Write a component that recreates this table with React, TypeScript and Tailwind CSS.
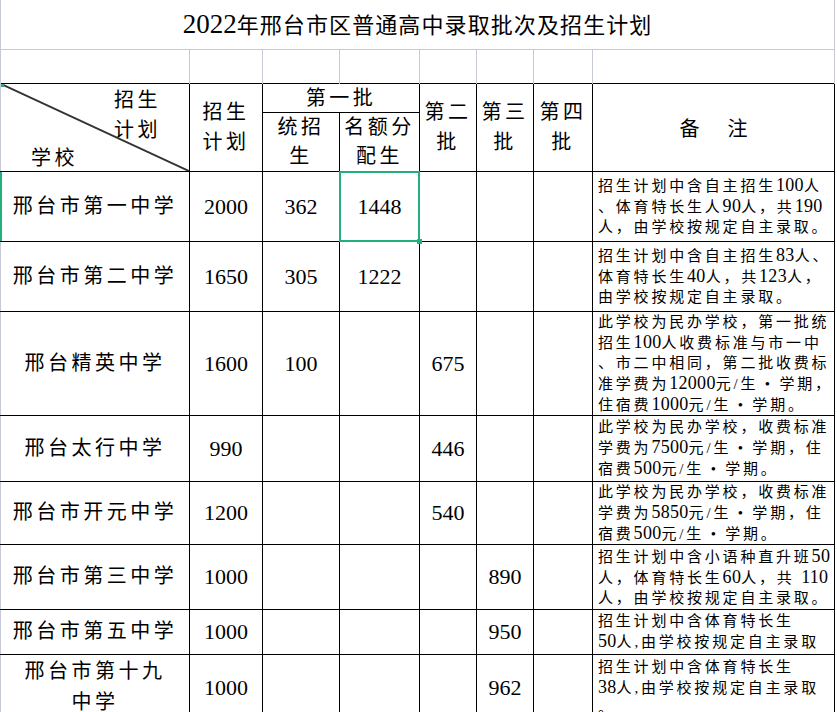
import React from "react"

const green = "#21b07a"

// digits get their own (larger) latin size, everything else uses the CJK size
function Mixed({ text, latin }: { text: string; latin: string }) {
  const parts = text.split(/(\d+)/)
  return (
    <>
      {parts.map((p, i) =>
        /^\d+$/.test(p) ? (
          <span key={i} className={latin}>
            {p}
          </span>
        ) : (
          <span key={i}>{p}</span>
        )
      )}
    </>
  )
}

type Row = {
  h: string
  name: string[]
  plan: string
  tong: string
  ming: string
  b2: string
  b3: string
  notes: string[]
  sel?: boolean
}

const rows: Row[] = [
  {
    h: "h-[70px]",
    name: ["邢台市第一中学"],
    plan: "2000",
    tong: "362",
    ming: "1448",
    b2: "",
    b3: "",
    notes: ["招生计划中含自主招生100人", "、体育特长生人90人，共190", "人，由学校按规定自主录取。"],
    sel: true,
  },
  {
    h: "h-[70px]",
    name: ["邢台市第二中学"],
    plan: "1650",
    tong: "305",
    ming: "1222",
    b2: "",
    b3: "",
    notes: ["招生计划中含自主招生83人、", "体育特长生40人，共123人，", "由学校按规定自主录取。"],
  },
  {
    h: "h-[104px]",
    name: ["邢台精英中学"],
    plan: "1600",
    tong: "100",
    ming: "",
    b2: "675",
    b3: "",
    notes: [
      "此学校为民办学校，第一批统",
      "招生100人收费标准与市一中",
      "、市二中相同，第二批收费标",
      "准学费为12000元/生 • 学期，",
      "住宿费1000元/生 • 学期。",
    ],
  },
  {
    h: "h-[66px]",
    name: ["邢台太行中学"],
    plan: "990",
    tong: "",
    ming: "",
    b2: "446",
    b3: "",
    notes: ["此学校为民办学校，收费标准", "学费为7500元/生 • 学期，住", "宿费500元/生 • 学期。"],
  },
  {
    h: "h-[63px]",
    name: ["邢台市开元中学"],
    plan: "1200",
    tong: "",
    ming: "",
    b2: "540",
    b3: "",
    notes: ["此学校为民办学校，收费标准", "学费为5850元/生 • 学期，住", "宿费500元/生 • 学期。"],
  },
  {
    h: "h-[65px]",
    name: ["邢台市第三中学"],
    plan: "1000",
    tong: "",
    ming: "",
    b2: "",
    b3: "890",
    notes: ["招生计划中含小语种直升班50", "人，体育特长生60人，共 110", "人，由学校按规定自主录取。"],
  },
  {
    h: "h-[45px]",
    name: ["邢台市第五中学"],
    plan: "1000",
    tong: "",
    ming: "",
    b2: "",
    b3: "950",
    notes: ["招生计划中含体育特长生", "50人,由学校按规定自主录取"],
  },
  {
    h: "h-[66px]",
    name: ["邢台市第十九", "中学"],
    plan: "1000",
    tong: "",
    ming: "",
    b2: "",
    b3: "962",
    notes: ["招生计划中含体育特长生", "38人,由学校按规定自主录取", "。"],
  },
]

const cell = "p-0 border border-black text-center align-middle"
const first = "p-0 border border-black border-l-[#c6c9d8] text-center align-middle"
const gray = "p-0 border-l border-r border-[#c6c9d8]"
const head = "text-[20px] leading-[30px] tracking-[3.5px]"
const num = "text-[22px]"

export default function App() {
  return (
    <div className="w-[837px] h-[712px] overflow-hidden bg-white text-black font-['Liberation_Serif','Noto_Sans_CJK_SC',serif]">
      <table className="table-fixed border-collapse w-[835px]">
        <colgroup>
          <col className="w-[189px]" />
          <col className="w-[73px]" />
          <col className="w-[77px]" />
          <col className="w-[80px]" />
          <col className="w-[57px]" />
          <col className="w-[57px]" />
          <col className="w-[59px]" />
          <col className="w-[242px]" />
        </colgroup>
        <tbody>
          <tr className="h-[49px]">
            <td
              colSpan={8}
              className="p-0 border-l border-r border-b border-[#c6c9d8] text-center align-middle text-[22px] tracking-[1.1px] whitespace-nowrap"
            >
              <Mixed text="2022年邢台市区普通高中录取批次及招生计划" latin="text-[27px] tracking-normal" />
            </td>
          </tr>
          <tr className="h-[34px]">
            {[0, 1, 2, 3, 4, 5, 6, 7].map((i) => (
              <td key={i} className={gray} />
            ))}
          </tr>
          <tr className="h-[29px]">
            <td rowSpan={2} className={first + " relative align-top"}>
              <svg
                className="absolute inset-0 h-full w-full"
                viewBox="0 0 100 100"
                preserveAspectRatio="none"
              >
                <line
                  x1="0"
                  y1="0"
                  x2="100"
                  y2="100"
                  stroke="#333"
                  strokeWidth="2"
                  vectorEffect="non-scaling-stroke"
                />
              </svg>
              <span className="absolute left-0 top-0 h-[3px] w-[3px] bg-[#21b07a]" />
              <div className={"flex flex-col pt-[1px] text-left " + head}>
                <span className="pl-[113px]">招生</span>
                <span className="pl-[113px]">计划</span>
                <span className="pl-[30px] leading-[26px]">学校</span>
              </div>
            </td>
            <td rowSpan={2} className={cell + " " + head}>
              <div>招生</div>
              <div>计划</div>
            </td>
            <td colSpan={2} className={cell + " text-[20px] leading-[24px] tracking-[3.5px]"}>
              第一批
            </td>
            <td rowSpan={2} className={cell + " " + head}>
              <div>第二</div>
              <div>批</div>
            </td>
            <td rowSpan={2} className={cell + " " + head}>
              <div>第三</div>
              <div>批</div>
            </td>
            <td rowSpan={2} className={cell + " " + head}>
              <div>第四</div>
              <div>批</div>
            </td>
            <td rowSpan={2} className={cell + " text-[20px]"}>
              <div className="flex justify-center gap-[28px] pt-[4px]">
                <span>备</span>
                <span>注</span>
              </div>
            </td>
          </tr>
          <tr className="h-[58px]">
            <td className={cell + " text-[20px] leading-[29px] tracking-[3.5px]"}>
              <div>统招</div>
              <div>生</div>
            </td>
            <td className={cell + " text-[20px] leading-[29px] tracking-[3.5px]"}>
              <div>名额分</div>
              <div>配生</div>
            </td>
          </tr>
          {rows.map((r, i) => (
            <tr key={i} className={r.h}>
              <td className={first + " relative text-[20px] leading-[31px] tracking-[3.5px] whitespace-nowrap"}>
                {r.sel ? (
                  <span className="absolute -left-[1px] top-0 bottom-0 w-[2px] bg-[#21b07a]" />
                ) : null}
                {r.name.map((n) => (
                  <div key={n}>{n}</div>
                ))}
              </td>
              <td className={cell + " " + num}>{r.plan}</td>
              <td className={cell + " " + num}>{r.tong}</td>
              <td className={cell + " relative " + num}>
                {r.ming}
                {r.sel ? (
                  <>
                    <span
                      className="absolute -left-[1px] -top-[1px] -right-[1px] -bottom-[1px] border-2"
                      style={{ borderColor: green }}
                    />
                    <span className="absolute -right-[3px] -bottom-[3px] h-[5px] w-[5px] bg-[#21b07a]" />
                  </>
                ) : null}
              </td>
              <td className={cell + " " + num}>{r.b2}</td>
              <td className={cell + " " + num}>{r.b3}</td>
              <td className={cell} />
              <td className={cell + " text-left px-[5px] text-[15px] leading-[20px] tracking-[2.8px] whitespace-nowrap"}>
                {r.notes.map((n, j) => (
                  <div key={j}>
                    <Mixed text={n} latin="text-[18px] tracking-[0.3px]" />
                  </div>
                ))}
              </td>
            </tr>
          ))}
        </tbody>
      </table>
    </div>
  )
}
